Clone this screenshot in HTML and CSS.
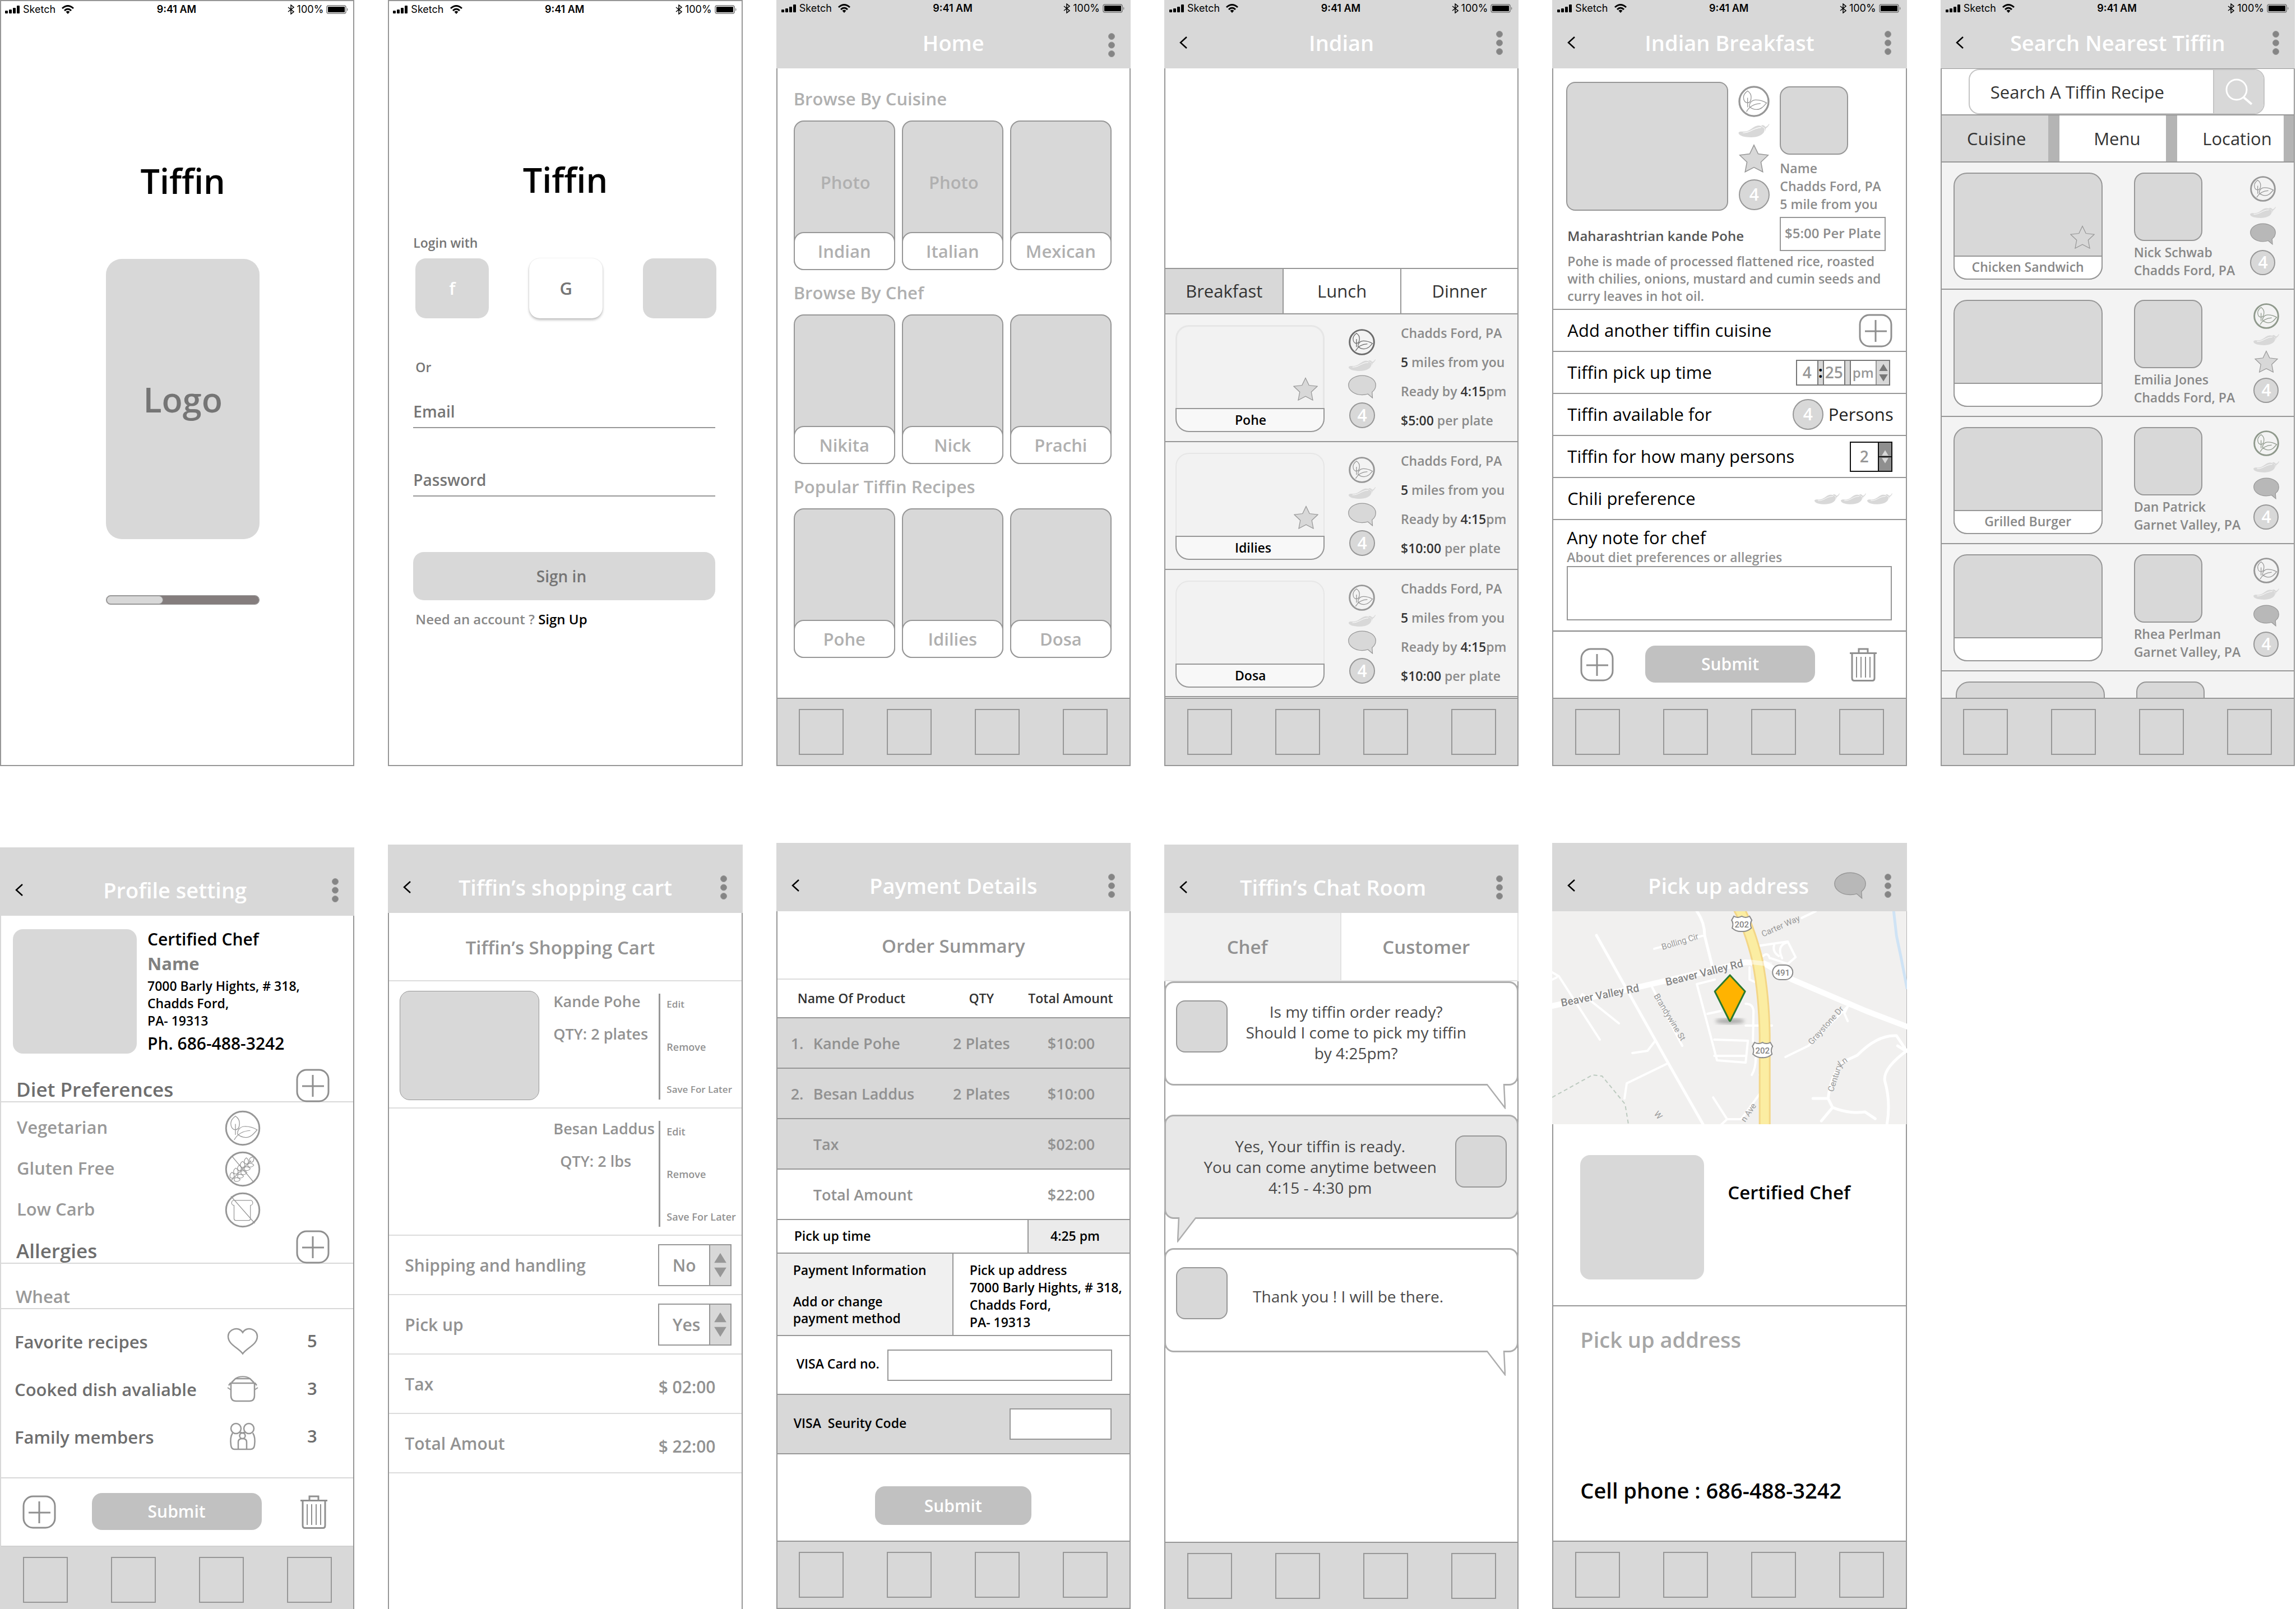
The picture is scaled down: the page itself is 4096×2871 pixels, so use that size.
FILE: index.html
```html
<!DOCTYPE html>
<html lang="en">
<head>
<meta charset="utf-8">
<meta name="viewport" content="width=device-width, initial-scale=1">
<title>Tiffin – app wireframes</title>
<link rel="stylesheet" href="styles.css">
</head>
<body>
<svg class="sprite" aria-hidden="true">
  <symbol id="signal" viewBox="0 0 26 14"><rect x="0" y="9" width="5" height="5" rx="1"/><rect x="7" y="7" width="5" height="7" rx="1"/><rect x="14" y="4" width="5" height="10" rx="1"/><rect x="21" y="0" width="5" height="14" rx="1"/></symbol>
  <symbol id="wifi" viewBox="0 0 24 16"><path d="M2 6Q12-3 22 6" fill="none" stroke="#000" stroke-width="3"/><path d="M6 10Q12 4 18 10" fill="none" stroke="#000" stroke-width="3"/><path d="M8.500 12Q12 9 15.500 12L12 16Z"/></symbol>
  <symbol id="bluetooth" viewBox="0 0 12 18"><path d="M1 5L11 13L6 17V1L11 5L1 13" fill="none" stroke="#000" stroke-width="1.500"/></symbol>
  <symbol id="battery" viewBox="0 0 40 16"><rect x="1" y="1" width="34" height="14" rx="3" fill="none" stroke="#777" stroke-width="1.500"/><rect x="3" y="3" width="30" height="10" rx="1"/><path d="M37 5Q40 8 37 11Z" fill="#777"/></symbol>
  <symbol id="back" viewBox="0 0 14 24"><path d="M13 2L2 12L13 22" fill="none" stroke="#000" stroke-width="2.500"/></symbol>
  <symbol id="dots" viewBox="0 0 12 43"><g fill="#858585" stroke="#979797"><circle cx="6" cy="6" r="5.500"/><circle cx="6" cy="21.500" r="5.500"/><circle cx="6" cy="37" r="5.500"/></g></symbol>
  <symbol id="leaf" viewBox="0 0 256 256"><g fill="none" stroke="currentColor"><circle class="ring" cx="128" cy="128" r="119"/><path class="line" d="M76 42C54 58 43 75 43 95C43 118 54 139 76 139C96 139 105 118 105 92C105 72 94 54 76 42ZM76 98V176M231 140C200 122 170 115 140 116C110 117 90 140 91 170C110 188 130 194 150 194C185 194 205 170 231 140ZM67 212C85 180 120 148 182 145"/></g></symbol>
  <symbol id="wheat" viewBox="0 0 256 256"><g fill="none" stroke="currentColor"><circle class="ring" cx="128" cy="128" r="119"/><g class="line">
    <path d="M44 211L187 68M50 35L209 225"/>
    <path d="M52 151C31 164 32 193 52 193C72 193 73 164 52 151ZM79 121C57 134 58 163 79 163C100 163 101 134 79 121ZM107 98C85 112 86 140 107 139C120 138 122 112 107 98ZM127 73C105 86 106 116 127 116C148 116 149 86 127 73ZM154 48C134 62 134 91 154 91C174 91 174 62 154 48Z"/>
    <path d="M110 203C96 184 67 185 67 203C67 221 96 222 110 203ZM134 179C120 160 91 161 91 179C91 197 120 198 134 179ZM158 153C144 134 115 135 115 153C115 173 144 174 158 153ZM182 125C168 106 139 107 139 125C139 143 168 144 182 125ZM207 100C193 81 164 82 164 100C164 118 193 119 207 100ZM207 43C186 42 175 50 175 64C176 80 187 80 196 79C207 72 209 60 207 43Z"/></g></g></symbol>
  <symbol id="bread" viewBox="0 0 256 256"><g fill="none" stroke="currentColor"><circle class="ring" cx="128" cy="128" r="119"/><path class="line" d="M68 59H180A18 18 0 0 1 183 95V190Q183 202 171 202H78Q66 202 66 190V95A18 18 0 0 1 68 59ZM44 30L214 223"/></g></symbol>
  <symbol id="chili" viewBox="0 0 193 84"><path fill="#d8d8d8" d="M0 57C1 48 14 47 30 48C72 50 84 18 118 11C126 10 136 11 141 13C146 22 154 20 158 26C164 28 163 34 162 42C158 68 120 84 80 84C40 84 3 76 0 57Z"/><path fill="#d8d8d8" d="M142 10C150 5 162 9 167 19C178 18 184 9 190 0L193 3C187 14 180 24 172 27C168 34 170 40 167 46C167 34 164 26 158 22C152 20 146 18 142 10Z"/><path fill="none" stroke="#fff" stroke-width="4" d="M27 56C72 58 92 24 141 23"/></symbol>
  <symbol id="star" viewBox="0 0 176 168"><path stroke="#979797" stroke-width="5" d="M88 6L113 58L172 65L129 106L140 164L88 137L36 164L47 106L4 65L63 58Z"/></symbol>
  <symbol id="bubble" viewBox="0 0 200 168"><path stroke="#979797" stroke-width="5" d="M141 136L174 164L171 122C190 108 197 92 197 73C197 35 154 4 100 4S3 35 3 73S46 142 100 142C115 142 128 140 141 136Z"/></symbol>
  <symbol id="plus" viewBox="0 0 60 60"><g fill="none" stroke="#8f8f8f" stroke-width="3"><rect x="2" y="2" width="56" height="56" rx="17"/><path d="M11 31H50M30 11V50"/></g></symbol>
  <symbol id="trash" viewBox="0 0 48 60"><g fill="none" stroke="#8f8f8f" stroke-width="3"><path d="M0 9.500H48M16 9V2H32V9M4 10V54Q4 58.500 8 58.500H40Q44 58.500 44 54V10"/><path stroke-width="2" d="M12 16V53M20 16V53M28 16V53M36 16V53"/></g></symbol>
  <symbol id="heart" viewBox="0 0 56 49"><path fill="none" stroke="#979797" stroke-width="2.500" d="M28 47C20 36 2 31 2 16C2 3 21-3 28 9C35-3 54 3 54 16C54 31 36 36 28 47Z"/></symbol>
  <symbol id="pot" viewBox="0 0 56 48"><g fill="none" stroke="#979797" stroke-width="2.500"><path d="M7 15V36Q7 46 16 46H40Q49 46 49 36V15"/><path d="M3 18L6 14H50L53 18M8 13L15 6H41L48 13"/><path stroke-width="2" d="M15 6C21 1 35 1 41 6M1 22L7 26M55 22L49 26"/></g></symbol>
  <symbol id="family" viewBox="0 0 46 50"><g fill="none" stroke="#979797" stroke-width="2.500"><circle cx="11" cy="11" r="9"/><circle cx="34" cy="11" r="9"/><circle cx="22.500" cy="24" r="5"/><path d="M5 19C1 25 1 34 2 41Q3 48 8 48H37Q43 48 44 41C45 34 45 25 41 19M15 48V35Q15 29 22.500 29Q30 29 30 35V48M17 19Q19 17 22.500 19Q26 17 28 19"/></g></symbol>
  <symbol id="search" viewBox="0 0 48 48"><g fill="none" stroke="#fff" stroke-width="3"><circle cx="20" cy="20" r="18"/><path stroke-width="4" d="M33 34L47 46"/></g></symbol>
  <symbol id="spin" viewBox="0 0 24 44"><path d="M12 2L22 18H2ZM12 42L22 26H2Z" fill="currentColor"/></symbol>
</svg>

<main class="board">

  <section class="phone splash" aria-label="Splash">
    <div class="status"><svg class="i-signal"><use href="#signal"/></svg><span class="carrier">Sketch</span><svg class="i-wifi"><use href="#wifi"/></svg><b class="clock">9:41 AM</b><svg class="i-bt"><use href="#bluetooth"/></svg><span>100%</span><svg class="i-battery"><use href="#battery"/></svg></div>
    <h1 class="brand">Tiffin</h1>
    <div class="logo">Logo</div>
    <progress class="loading" value="37" max="100" aria-label="Loading"></progress>
  </section>

  <section class="phone login" aria-label="Login">
    <div class="status"><svg class="i-signal"><use href="#signal"/></svg><span class="carrier">Sketch</span><svg class="i-wifi"><use href="#wifi"/></svg><b class="clock">9:41 AM</b><svg class="i-bt"><use href="#bluetooth"/></svg><span>100%</span><svg class="i-battery"><use href="#battery"/></svg></div>
    <h1 class="brand">Tiffin</h1>
    <form class="login-form">
      <p class="hint">Login with</p>
      <div class="socials"><button type="button" class="social facebook">f</button><button type="button" class="social google">G</button><button type="button" class="social" aria-label="Other account"></button></div>
      <p class="hint or">Or</p>
      <input class="line-input" type="email" placeholder="Email" aria-label="Email">
      <input class="line-input" type="password" placeholder="Password" aria-label="Password">
      <button type="button" class="signin">Sign in</button>
      <p class="signup">Need an account ? <a href="#">Sign Up</a></p>
    </form>
  </section>

  <section class="phone plain home" aria-label="Home">
    <header class="top">
      <div class="status"><svg class="i-signal"><use href="#signal"/></svg><span class="carrier">Sketch</span><svg class="i-wifi"><use href="#wifi"/></svg><b class="clock">9:41 AM</b><svg class="i-bt"><use href="#bluetooth"/></svg><span>100%</span><svg class="i-battery"><use href="#battery"/></svg></div>
      <div class="bar"><span></span><h1>Home</h1><button class="icon-btn" aria-label="Menu"><svg class="i-dots"><use href="#dots"/></svg></button></div>
    </header>
    <div class="browse">
      <h2>Browse By Cuisine</h2>
      <div class="tiles"><a href="#" class="tile"><span class="tile-photo">Photo</span><span class="tile-name">Indian</span></a><a href="#" class="tile"><span class="tile-photo">Photo</span><span class="tile-name">Italian</span></a><a href="#" class="tile"><span class="tile-photo"></span><span class="tile-name">Mexican</span></a></div>
      <h2>Browse By Chef</h2>
      <div class="tiles"><a href="#" class="tile"><span class="tile-photo"></span><span class="tile-name">Nikita</span></a><a href="#" class="tile"><span class="tile-photo"></span><span class="tile-name">Nick</span></a><a href="#" class="tile"><span class="tile-photo"></span><span class="tile-name">Prachi</span></a></div>
      <h2>Popular Tiffin Recipes</h2>
      <div class="tiles"><a href="#" class="tile"><span class="tile-photo"></span><span class="tile-name">Pohe</span></a><a href="#" class="tile"><span class="tile-photo"></span><span class="tile-name">Idilies</span></a><a href="#" class="tile"><span class="tile-photo"></span><span class="tile-name">Dosa</span></a></div>
    </div>
    <nav class="tabbar" aria-label="Main"><a href="#" aria-label="Tab 1"></a><a href="#" aria-label="Tab 2"></a><a href="#" aria-label="Tab 3"></a><a href="#" aria-label="Tab 4"></a></nav>
  </section>

  <section class="phone plain" aria-label="Indian">
    <header class="top">
      <div class="status"><svg class="i-signal"><use href="#signal"/></svg><span class="carrier">Sketch</span><svg class="i-wifi"><use href="#wifi"/></svg><b class="clock">9:41 AM</b><svg class="i-bt"><use href="#bluetooth"/></svg><span>100%</span><svg class="i-battery"><use href="#battery"/></svg></div>
      <div class="bar"><button class="icon-btn" aria-label="Back"><svg class="i-back"><use href="#back"/></svg></button><h1>Indian</h1><button class="icon-btn" aria-label="Menu"><svg class="i-dots"><use href="#dots"/></svg></button></div>
    </header>
    <div class="hero"></div>
    <div class="meals"><button class="on">Breakfast</button><button>Lunch</button><button>Dinner</button></div>
    <article class="meal strong">
      <div class="dish pale"><svg class="i-star"><use href="#star"/></svg><span class="dish-name">Pohe</span></div>
      <div class="marks"><svg class="i-leaf"><use href="#leaf"/></svg><svg class="i-chili"><use href="#chili"/></svg><svg class="i-bubble"><use href="#bubble"/></svg><span class="count">4</span></div>
      <p class="facts">Chadds Ford, PA<br><b>5</b> miles from you<br>Ready by <b>4:15</b>pm<br><b>$5:00</b> per plate</p>
    </article>
    <article class="meal">
      <div class="dish pale"><svg class="i-star"><use href="#star"/></svg><span class="dish-name">Idilies</span></div>
      <div class="marks"><svg class="i-leaf"><use href="#leaf"/></svg><svg class="i-chili"><use href="#chili"/></svg><svg class="i-bubble"><use href="#bubble"/></svg><span class="count">4</span></div>
      <p class="facts">Chadds Ford, PA<br><b>5</b> miles from you<br>Ready by <b>4:15</b>pm<br><b>$10:00</b> per plate</p>
    </article>
    <article class="meal">
      <div class="dish pale"><span class="dish-name">Dosa</span></div>
      <div class="marks"><svg class="i-leaf"><use href="#leaf"/></svg><svg class="i-chili"><use href="#chili"/></svg><svg class="i-bubble"><use href="#bubble"/></svg><span class="count">4</span></div>
      <p class="facts">Chadds Ford, PA<br><b>5</b> miles from you<br>Ready by <b>4:15</b>pm<br><b>$10:00</b> per plate</p>
    </article>
    <nav class="tabbar" aria-label="Main"><a href="#" aria-label="Tab 1"></a><a href="#" aria-label="Tab 2"></a><a href="#" aria-label="Tab 3"></a><a href="#" aria-label="Tab 4"></a></nav>
  </section>

  <section class="phone plain" aria-label="Indian Breakfast">
    <header class="top">
      <div class="status"><svg class="i-signal"><use href="#signal"/></svg><span class="carrier">Sketch</span><svg class="i-wifi"><use href="#wifi"/></svg><b class="clock">9:41 AM</b><svg class="i-bt"><use href="#bluetooth"/></svg><span>100%</span><svg class="i-battery"><use href="#battery"/></svg></div>
      <div class="bar"><button class="icon-btn" aria-label="Back"><svg class="i-back"><use href="#back"/></svg></button><h1>Indian Breakfast</h1><button class="icon-btn" aria-label="Menu"><svg class="i-dots"><use href="#dots"/></svg></button></div>
    </header>
    <div class="recipe">
      <div class="recipe-main">
        <div class="recipe-photo"></div>
        <div class="marks large"><svg class="i-leaf"><use href="#leaf"/></svg><svg class="i-chili"><use href="#chili"/></svg><svg class="i-star"><use href="#star"/></svg><span class="count">4</span></div>
        <h2>Maharashtrian kande Pohe</h2>
      </div>
      <div class="recipe-chef">
        <div class="avatar"></div>
        <p>Name<br>Chadds Ford, PA<br>5 mile from you</p>
        <strong class="price">$5:00 Per Plate</strong>
      </div>
      <p class="about">Pohe is made of processed flattened rice, roasted<br>with chilies, onions, mustard and cumin seeds and<br>curry leaves in hot oil.</p>
    </div>
    <form class="options">
      <div class="option"><span>Add another tiffin cuisine</span><button type="button" class="icon-btn" aria-label="Add cuisine"><svg class="i-plus"><use href="#plus"/></svg></button></div>
      <div class="option"><label for="hour">Tiffin pick up time</label><div class="time"><input id="hour" value="4"><i>:</i><input value="25" aria-label="Minutes"><i></i><input class="half" value="pm" aria-label="Half of day"><button type="button" aria-label="Change time"><svg><use href="#spin"/></svg></button></div></div>
      <div class="option"><span>Tiffin available for</span><span class="available"><span class="count">4</span>Persons</span></div>
      <div class="option"><label for="persons">Tiffin for how many persons</label><div class="stepper"><input id="persons" value="2"><button type="button" aria-label="Change persons"><svg><use href="#spin"/></svg></button></div></div>
      <div class="option"><span>Chili preference</span><span class="chilis"><svg class="i-chili"><use href="#chili"/></svg><svg class="i-chili"><use href="#chili"/></svg><svg class="i-chili"><use href="#chili"/></svg></span></div>
      <div class="note"><label for="note">Any note for chef</label><small>About diet preferences or allegries</small><textarea id="note"></textarea></div>
      <div class="actions"><button type="button" class="icon-btn" aria-label="Add"><svg class="i-plus"><use href="#plus"/></svg></button><button type="button" class="submit">Submit</button><button type="button" class="icon-btn" aria-label="Delete"><svg class="i-trash"><use href="#trash"/></svg></button></div>
    </form>
    <nav class="tabbar" aria-label="Main"><a href="#" aria-label="Tab 1"></a><a href="#" aria-label="Tab 2"></a><a href="#" aria-label="Tab 3"></a><a href="#" aria-label="Tab 4"></a></nav>
  </section>

  <section class="phone plain" aria-label="Search Nearest Tiffin">
    <header class="top">
      <div class="status"><svg class="i-signal"><use href="#signal"/></svg><span class="carrier">Sketch</span><svg class="i-wifi"><use href="#wifi"/></svg><b class="clock">9:41 AM</b><svg class="i-bt"><use href="#bluetooth"/></svg><span>100%</span><svg class="i-battery"><use href="#battery"/></svg></div>
      <div class="bar"><button class="icon-btn" aria-label="Back"><svg class="i-back"><use href="#back"/></svg></button><h1>Search Nearest Tiffin</h1><button class="icon-btn" aria-label="Menu"><svg class="i-dots"><use href="#dots"/></svg></button></div>
    </header>
    <form class="search"><div class="search-box"><input type="search" placeholder="Search A Tiffin Recipe" aria-label="Search a tiffin recipe"><button type="button" aria-label="Search"><svg class="i-search"><use href="#search"/></svg></button></div></form>
    <div class="filters"><button class="on">Cuisine</button><button>Menu</button><button class="last">Location</button></div>
    <article class="result">
      <div class="dish"><svg class="i-star hollow"><use href="#star"/></svg><span class="dish-name">Chicken Sandwich</span></div>
      <div class="person"><div class="avatar"></div><p>Nick Schwab<br>Chadds Ford, PA</p></div>
      <div class="marks dark first"><svg class="i-leaf"><use href="#leaf"/></svg><svg class="i-chili"><use href="#chili"/></svg><svg class="i-bubble"><use href="#bubble"/></svg><span class="count">4</span></div>
    </article>
    <article class="result">
      <div class="dish"><span class="dish-name"></span></div>
      <div class="person"><div class="avatar"></div><p>Emilia Jones<br>Chadds Ford, PA</p></div>
      <div class="marks dark green"><svg class="i-leaf"><use href="#leaf"/></svg><svg class="i-chili"><use href="#chili"/></svg><svg class="i-star"><use href="#star"/></svg><span class="count">4</span></div>
    </article>
    <article class="result">
      <div class="dish"><span class="dish-name">Grilled Burger</span></div>
      <div class="person"><div class="avatar"></div><p>Dan Patrick<br>Garnet Valley, PA</p></div>
      <div class="marks dark green"><svg class="i-leaf"><use href="#leaf"/></svg><svg class="i-chili"><use href="#chili"/></svg><svg class="i-bubble"><use href="#bubble"/></svg><span class="count">4</span></div>
    </article>
    <article class="result">
      <div class="dish"><span class="dish-name"></span></div>
      <div class="person"><div class="avatar"></div><p>Rhea Perlman<br>Garnet Valley, PA</p></div>
      <div class="marks dark"><svg class="i-leaf"><use href="#leaf"/></svg><svg class="i-chili"><use href="#chili"/></svg><svg class="i-bubble"><use href="#bubble"/></svg><span class="count">4</span></div>
    </article>
    <article class="result cut"><div class="dish"></div><div class="person"><div class="avatar"></div></div></article>
    <nav class="tabbar" aria-label="Main"><a href="#" aria-label="Tab 1"></a><a href="#" aria-label="Tab 2"></a><a href="#" aria-label="Tab 3"></a><a href="#" aria-label="Tab 4"></a></nav>
  </section>

  <section class="phone plain light open profile-screen" aria-label="Profile setting">
    <header class="top tall">
      <div class="bar"><button class="icon-btn" aria-label="Back"><svg class="i-back"><use href="#back"/></svg></button><h1>Profile setting</h1><button class="icon-btn" aria-label="Menu"><svg class="i-dots"><use href="#dots"/></svg></button></div>
    </header>
    <div class="profile"><div class="portrait"></div>
      <div class="contact"><h2>Certified Chef</h2><b>Name</b><address>7000 Barly Hights, # 318,<br>Chadds Ford,<br>PA- 19313</address><p>Ph. 686-488-3242</p></div>
    </div>
    <div class="section-head"><h2>Diet Preferences</h2><button class="icon-btn" aria-label="Add diet"><svg class="i-plus"><use href="#plus"/></svg></button></div>
    <ul class="diets">
      <li><span>Vegetarian</span><svg class="i-diet"><use href="#leaf"/></svg></li>
      <li><span>Gluten Free</span><svg class="i-diet"><use href="#wheat"/></svg></li>
      <li><span>Low Carb</span><svg class="i-diet"><use href="#bread"/></svg></li>
    </ul>
    <div class="section-head"><h2>Allergies</h2><button class="icon-btn" aria-label="Add allergy"><svg class="i-plus"><use href="#plus"/></svg></button></div>
    <p class="allergy">Wheat</p>
    <ul class="totals">
      <li><span>Favorite recipes</span><svg class="i-stat"><use href="#heart"/></svg><b>5</b></li>
      <li><span>Cooked dish avaliable</span><svg class="i-stat"><use href="#pot"/></svg><b>3</b></li>
      <li><span>Family members</span><svg class="i-stat"><use href="#family"/></svg><b>3</b></li>
    </ul>
    <div class="actions"><button type="button" class="icon-btn" aria-label="Add"><svg class="i-plus"><use href="#plus"/></svg></button><button type="button" class="submit">Submit</button><button type="button" class="icon-btn" aria-label="Delete"><svg class="i-trash"><use href="#trash"/></svg></button></div>
    <nav class="tabbar short" aria-label="Main"><a href="#" aria-label="Tab 1"></a><a href="#" aria-label="Tab 2"></a><a href="#" aria-label="Tab 3"></a><a href="#" aria-label="Tab 4"></a></nav>
  </section>

  <section class="phone plain open cart-screen" aria-label="Shopping cart">
    <header class="top tall">
      <div class="bar"><button class="icon-btn" aria-label="Back"><svg class="i-back"><use href="#back"/></svg></button><h1>Tiffin’s shopping cart</h1><button class="icon-btn" aria-label="Menu"><svg class="i-dots"><use href="#dots"/></svg></button></div>
    </header>
    <h2 class="subtitle cart-title">Tiffin’s Shopping Cart</h2>
    <article class="item"><div class="item-photo"></div><div class="item-text"><span>Kande Pohe</span><span>QTY: 2 plates</span></div><div class="item-links"><a href="#" class="tiny">Edit</a><a href="#">Remove</a><a href="#" class="tiny">Save For Later</a></div></article>
    <article class="item"><div class="item-photo none"></div><div class="item-text"><span>Besan Laddus</span><span class="in">QTY: 2 lbs</span></div><div class="item-links"><a href="#">Edit</a><a href="#">Remove</a><a href="#">Save For Later</a></div></article>
    <div class="cart-row"><label for="shipping">Shipping and handling</label><div class="picker"><select id="shipping"><option>No</option><option>Yes</option></select><span class="spin"><svg><use href="#spin"/></svg></span></div></div>
    <div class="cart-row"><label for="pickup">Pick up</label><div class="picker"><select id="pickup"><option>Yes</option><option>No</option></select><span class="spin"><svg><use href="#spin"/></svg></span></div></div>
    <div class="cart-row"><span>Tax</span><span class="sum">$ 02:00</span></div>
    <div class="cart-row"><span>Total Amout</span><span class="sum">$ 22:00</span></div>
  </section>

  <section class="phone plain" aria-label="Payment Details">
    <header class="top tall">
      <div class="bar"><button class="icon-btn" aria-label="Back"><svg class="i-back"><use href="#back"/></svg></button><h1>Payment Details</h1><button class="icon-btn" aria-label="Menu"><svg class="i-dots"><use href="#dots"/></svg></button></div>
    </header>
    <h2 class="subtitle">Order Summary</h2>
    <table class="order">
      <thead><tr><th class="no"></th><th class="product">Name Of Product</th><th>QTY</th><th>Total Amount</th></tr></thead>
      <tbody>
        <tr><td class="no">1.</td><td>Kande Pohe</td><td class="mid">2 Plates</td><td class="mid">$10:00</td></tr>
        <tr><td class="no">2.</td><td>Besan Laddus</td><td class="mid">2 Plates</td><td class="mid">$10:00</td></tr>
        <tr><td></td><td>Tax</td><td></td><td class="mid">$02:00</td></tr>
        <tr class="total"><td></td><td>Total Amount</td><td></td><td class="mid">$22:00</td></tr>
      </tbody>
    </table>
    <div class="pickup-time"><span>Pick up time</span><b>4:25 pm</b></div>
    <div class="pay-info"><div class="method"><p>Payment Information</p><p><a href="#">Add or change<br>payment method</a></p></div><address>Pick up address<br>7000 Barly Hights, # 318,<br>Chadds Ford,<br>PA- 19313</address></div>
    <div class="card-row"><label for="card">VISA Card no.</label><input id="card"></div>
    <div class="card-row code"><label for="cvv">VISA&nbsp; Seurity Code</label><input id="cvv"></div>
    <div class="pay"><button type="button" class="submit">Submit</button></div>
    <nav class="tabbar" aria-label="Main"><a href="#" aria-label="Tab 1"></a><a href="#" aria-label="Tab 2"></a><a href="#" aria-label="Tab 3"></a><a href="#" aria-label="Tab 4"></a></nav>
  </section>

  <section class="phone plain open chat-screen" aria-label="Chat room">
    <header class="top tall">
      <div class="bar"><button class="icon-btn" aria-label="Back"><svg class="i-back"><use href="#back"/></svg></button><h1>Tiffin’s Chat Room</h1><button class="icon-btn" aria-label="Menu"><svg class="i-dots"><use href="#dots"/></svg></button></div>
    </header>
    <div class="sides"><button class="on">Chef</button><button>Customer</button></div>
    <div class="chat">
      <div class="msg"><div class="face"></div><p>Is my tiffin order ready?<br>Should I come to pick my tiffin<br>by 4:25pm?</p><svg class="tail" viewBox="0 0 34 45"><path d="M0 0L33 43L31 0" fill="#fff" stroke="#adadad" stroke-width="2.500"/></svg></div>
      <div class="msg reply"><p>Yes, Your tiffin is ready.<br>You can come anytime between<br>4:15 - 4:30 pm</p><div class="face"></div><svg class="tail" viewBox="0 0 34 45"><path d="M34 0L1 43L3 0" fill="#e8e8e8" stroke="#adadad" stroke-width="2.500"/></svg></div>
      <div class="msg"><div class="face"></div><p class="one">Thank you ! I will be there.</p><svg class="tail" viewBox="0 0 34 45"><path d="M0 0L33 43L31 0" fill="#fff" stroke="#adadad" stroke-width="2.500"/></svg></div>
    </div>
    <nav class="tabbar" aria-label="Main"><a href="#" aria-label="Tab 1"></a><a href="#" aria-label="Tab 2"></a><a href="#" aria-label="Tab 3"></a><a href="#" aria-label="Tab 4"></a></nav>
  </section>

  <section class="phone plain" aria-label="Pick up address">
    <header class="top tall">
      <div class="bar with-chat"><button class="icon-btn" aria-label="Back"><svg class="i-back"><use href="#back"/></svg></button><h1>Pick up address</h1><button class="icon-btn" aria-label="Chat"><svg class="i-bubble"><use href="#bubble"/></svg></button><button class="icon-btn" aria-label="Menu"><svg class="i-dots"><use href="#dots"/></svg></button></div>
    </header>
    <svg class="map" viewBox="0 0 632 380" preserveAspectRatio="xMidYMid slice" role="img" aria-label="Map around Beaver Valley Rd">
      <defs><filter id="soft"><feGaussianBlur stdDeviation="3"/></filter></defs>
      <rect width="632" height="380" fill="#f1f0ef"/>
      <path d="M609 0L614 44L622 82L633 139" fill="none" stroke="#cfe3f5" stroke-width="5"/>
      <g fill="none" stroke="#fff" stroke-width="4" stroke-linejoin="round" stroke-linecap="round">
        <path stroke-width="5" d="M79 43L207 271L269 380"/>
        <path stroke-width="5" d="M258 0Q272 20 272 44L287 104"/>
        <path d="M0 109L12 116L85 229M0 122L8 118M54 148L119 200M54 148L46 160M178 135L232 240M143 253L170 249L184 231M129 334L133 307L205 272M182 67L268 44M258 130L294 266L345 270L349 231L289 229M258 130L290 122M277 183L300 178M345 165Q358 165 359 178L358 232M289 258L346 258M356 292Q363 280 363 262M416 260L457 240L527 170L521 182L527 196"/>
        <path stroke-width="5" d="M465 334H492L500 350L480 374M500 350Q530 362 558 358L576 370M492 334Q497 290 520 268L544 257Q580 220 614 222L632 249Q590 280 593 302Q604 340 597 380M632 250L616 240"/>
        <path d="M366 62L420 54L434 82L420 94L390 84M396 60Q392 72 404 80M418 56Q400 62 410 84M445 12L470 0M287 332L312 371L337 371L372 323M312 371L300 382M352 100V122L366 128M345 204H392M370 292H386M372 314H384M376 80Q384 72 388 84"/>
        <path stroke-width="10" d="M0 169L160 134L345 91L378 93L428 122L560 178L636 207"/>
      </g>
      <path d="M0 332L72 292L89 294L130 344L136 380" fill="none" stroke="#bccabf" stroke-width="2" stroke-dasharray="7 5"/>
      <g fill="none"><path d="M332-6Q352 30 366 88Q378 150 379 222V384" stroke="#f3d687" stroke-width="21"/><path d="M332-6Q352 30 366 88Q378 150 379 222V384" stroke="#fbeda2" stroke-width="15"/></g>
      <path d="M350 90L392 95" stroke="#fff" stroke-width="8" opacity=".5"/>
      <g class="road">
        <text transform="translate(17 170) rotate(-11)">Beaver Valley Rd</text>
        <text transform="translate(204 133) rotate(-14)">Beaver Valley Rd</text>
      </g>
      <g class="street">
        <text transform="translate(197 69) rotate(-17)">Bolling Cir</text>
        <text transform="translate(376 46) rotate(-24)">Carter Way</text>
        <text transform="translate(181 151) rotate(59)">Brandywine St</text>
        <text transform="translate(463 239) rotate(-48)">Graystone Dr</text>
        <text transform="translate(501 323) rotate(-72)">Century</text>
        <text transform="translate(514 277) rotate(-35)">Ln</text>
        <text transform="translate(344 377) rotate(-56)">n Ave</text>
        <text transform="translate(181 362) rotate(50)">W</text>
      </g>
      <g class="shield" fill="#fff" stroke="#8a8a8a" stroke-width="2"><path d="M324 9Q331 13 338 9Q345 13 352 9L356 16Q352 22 355 30Q347 37 338 36Q329 37 321 30Q324 22 320 16Z"/><path d="M361 234Q368 238 375 234Q382 238 389 234L393 241Q389 247 392 255Q384 262 375 261Q366 262 358 255Q361 247 357 241Z"/><rect x="393" y="96" width="36" height="26" rx="13"/></g>
      <g class="shield-no"><text x="338" y="29">202</text><text x="375" y="254">202</text><text x="411" y="115">491</text></g>
      <ellipse cx="317" cy="196" rx="26" ry="5" fill="#666" opacity=".5" filter="url(#soft)"/>
      <path d="M317 114L344 143L318 195Q317 197 316 195L290 143Z" fill="#ffb300" stroke="#2b7a2f" stroke-width="3" stroke-linejoin="round"/>
    </svg>
    <div class="pickup-chef"><div class="portrait"></div><h2>Certified Chef</h2></div>
    <div class="pickup-address"><h2>Pick up address</h2><p>Cell phone : 686-488-3242</p></div>
    <nav class="tabbar" aria-label="Main"><a href="#" aria-label="Tab 1"></a><a href="#" aria-label="Tab 2"></a><a href="#" aria-label="Tab 3"></a><a href="#" aria-label="Tab 4"></a></nav>
  </section>

</main>
</body>
</html>
```
FILE: styles.css
```css
*, *::before, *::after { box-sizing: border-box; }

:root {
  --fill: #d8d8d8;
  --stroke: #979797;
  --ring: 12;
  --line: 5;
}

body {
  margin: 0;
  background: #fff;
  color: #000;
  font: 600 23px/31px "Open Sans", "Noto Sans", sans-serif;
}

h1, h2, p, ul, address { margin: 0; padding: 0; font: inherit; }
ul { list-style: none; }
a { color: inherit; text-decoration: none; }
b, strong { font-weight: inherit; }
button, input, textarea, select {
  margin: 0; padding: 0; border: 0; border-radius: 0;
  background: none; color: inherit; font: inherit;
  appearance: none; outline: 0;
}
input { width: 100%; min-width: 0; }
svg { display: block; flex: none; }
.sprite { position: absolute; width: 0; height: 0; }
.icon-btn { display: flex; }

/* board */
.board {
  display: grid;
  grid-template-columns: repeat(6, minmax(0, 1fr));
  grid-template-rows: auto 1fr;
  gap: 137px 60px;
  min-height: 100vh;
  padding-right: 2px;
}
.phone {
  display: flex;
  flex-direction: column;
  border: 2px solid var(--stroke);
  background: #fff;
  min-width: 0;
}
.phone.plain { border-top: 0; }
.phone.open { border-bottom: 0; }
.phone.light { border-left-color: var(--fill); }
.profile-screen { margin-top: 8px; }
.cart-screen, .chat-screen { margin-top: 3px; }

/* status bar */
.status {
  display: flex;
  align-items: center;
  height: 30px;
  padding: 0 8px 0 7px;
  font: 400 18px/30px Inter, "Open Sans", sans-serif;
}
.clock { flex: 1; text-align: center; font-weight: 600; padding-right: 16px; }
.carrier { padding: 0 10px 0 6px; }
.i-signal { width: 26px; height: 14px; }
.i-wifi { width: 24px; height: 16px; }
.i-bt { width: 12px; height: 18px; margin-right: 5px; }
.i-battery { width: 40px; height: 16px; margin-left: 5px; }

/* header */
.top { margin: 0 -2px; height: 122px; flex: none; background: var(--fill); }
.top .status { padding: 0 10px 0 9px; }
.top.tall { padding-top: 30px; }
.bar {
  display: grid;
  grid-template-columns: 16px 1fr 16px;
  align-items: center;
  height: 92px;
  padding: 0 26px;
}
.bar h1 { text-align: center; font-size: 38px; line-height: 52px; color: #fff; }
.bar .icon-btn { justify-content: center; }
.i-back { width: 14px; height: 24px; }
.i-dots { width: 12px; height: 43px; }
.home .i-dots { margin-top: 8px; }
.profile-screen h1 { padding-right: 8px; }
.chat-screen h1 { padding-right: 30px; }
.bar.with-chat { grid-template-columns: 16px 1fr 57px 16px; column-gap: 31px; }
.bar.with-chat h1 { padding-left: 84px; white-space: nowrap; }
.with-chat .i-bubble { width: 57px; height: 48px; fill: #b8b8b8; }

/* bottom tabs */
.tabbar {
  display: grid;
  grid-template-columns: repeat(4, 1fr);
  justify-items: center;
  height: 120px;
  margin-top: auto;
  padding-top: 18px;
  flex: none;
  border-top: 2px solid var(--stroke);
  background: var(--fill);
}
.tabbar a { width: 80px; height: 82px; border: 2px solid var(--stroke); }
.tabbar.short { height: 113px; }
.light .tabbar { border-top-color: #d0d0d0; }

/* splash and login */
.brand { text-align: center; font-size: 61px; line-height: 80px; }
.splash { align-items: center; }
.splash .status { align-self: stretch; }
.splash .brand, .logo, .loading { margin-left: 20px; }
.splash .brand { margin-top: 251px; }
.logo {
  width: 274px; height: 500px; margin-top: 99px; padding-top: 2px;
  border-radius: 28px; background: var(--fill); color: #757575;
  font-size: 61px; line-height: 498px; text-align: center;
}
.loading {
  width: 274px; height: 17px; margin-top: 100px; appearance: none;
  border: 1px solid var(--stroke); border-radius: 8px; overflow: hidden;
}
.loading::-webkit-progress-bar { background: #847d7d; }
.loading::-webkit-progress-value { background: var(--fill); border: 1px solid var(--stroke); border-radius: 8px; }

.login .brand { margin-top: 249px; }
.login-form { display: flex; flex-direction: column; padding: 55px 47px 0 43px; }
.hint { color: #757575; line-height: 34px; }
.hint.or { margin-top: 70px; padding-left: 4px; }
.socials { display: flex; gap: 72px; margin: 11px 0 0 4px; }
.social { width: 131px; height: 107px; border-radius: 19px; background: var(--fill); font-size: 31px; flex: none; }
.facebook { color: #fff; }
.google { background: #fff; color: #757575; box-shadow: 0 3px 4px rgba(0, 0, 0, .25), 0 0 2px rgba(0, 0, 0, .12); }
.line-input { height: 56px; padding-bottom: 2px; border-bottom: 2px solid var(--stroke); font-size: 28px; }
.line-input::placeholder { color: #757575; opacity: 1; }
.line-input[type="email"] { margin: 36px 0 66px; }
.signin { height: 86px; margin-top: 99px; padding-right: 10px; border-radius: 19px; background: var(--fill); color: #757575; font-size: 28px; }
.signup { margin-top: 17px; padding-left: 4px; font-size: 24px; line-height: 34px; color: #888; }
.signup a { color: #000; }

/* home */
.browse { padding: 34px 32px 51px 29px; color: #b0b0b0; font-size: 31px; }
.browse h2 { line-height: 40px; }
.tiles { display: grid; grid-template-columns: repeat(3, 1fr); gap: 12px; margin: 19px 0 20px; }
.tile { display: flex; flex-direction: column; height: 267px; border: 2px solid var(--stroke); border-radius: 18px; background: var(--fill); text-align: center; }
.tile-photo { display: flex; flex: 1; align-items: center; justify-content: center; padding: 20px 0 0 4px; }
.tile-name { height: 68px; flex: none; margin: 0 -2px -2px; border: 2px solid var(--stroke); border-radius: 18px; background: #fff; line-height: 64px; }

/* dish list */
.hero { height: 356px; }
.meals { display: grid; grid-template-columns: repeat(3, 1fr); height: 83px; border: solid var(--stroke); border-width: 2px 0; font-size: 31px; font-weight: 400; color: #333; }
.meals button + button { border-left: 2px solid var(--stroke); }
.meals .on { background: var(--fill); }
.meal { display: flex; height: 228px; padding-left: 18px; border-bottom: 2px solid var(--stroke); background: #f3f3f3; --ring: 16; --line: 7; }
.meal:nth-last-child(2) { height: 227px; }
.dish {
  position: relative; display: flex; flex-direction: column; justify-content: flex-end;
  width: 266px; height: 191px; margin-top: 19px; flex: none;
  border: 2px solid var(--stroke); border-radius: 24px; background: var(--fill);
}
.dish-name {
  height: 43px; margin: 0 -2px -2px; border: 2px solid var(--stroke); border-radius: 0 0 24px 24px;
  background: #fff; color: #888; line-height: 36px; text-align: center;
}
.dish .i-star { position: absolute; right: 9px; bottom: 53px; }
.pale { border-color: #e6e6e6; background: #f2f2f2; }
.strong .pale { border-width: 3px; }
.strong .pale .dish-name { margin: 0 -3px -3px; }
.pale .dish-name { background: #f8f8f8; color: #000; text-align: left; padding-left: 104px; line-height: 39px; }
.marks { display: flex; flex-direction: column; align-items: center; gap: 7px; width: 50px; flex: none; color: var(--stroke); }
.ring { stroke-width: var(--ring); }
.line { stroke-width: var(--line); }
.strong .marks .i-leaf { color: #6b6b6b; }
.meal .marks { margin: 26px 44px 0 42px; }
.i-leaf { width: 47px; height: 47px; }
.i-chili { width: 50px; height: 21px; }
.i-star { width: 44px; height: 42px; fill: var(--fill); }
.i-star.hollow { fill: none; }
.i-bubble { width: 50px; height: 42px; fill: var(--fill); }
.count {
  display: block; width: 46px; height: 46px; flex: none;
  border: 2px solid var(--stroke); border-radius: 50%; background: var(--fill);
  color: #fff; font-size: 30px; line-height: 41px; text-align: center;
}
.facts { padding-top: 7px; line-height: 52px; color: #8a8a8a; white-space: nowrap; }
.facts b { color: #333; }

/* recipe */
.recipe { display: grid; grid-template-columns: 381px 1fr; padding: 24px 0 7px 23px; color: #8c8c8c; }
.recipe-main { display: grid; grid-template-columns: 289px 56px; column-gap: 18px; align-content: start; }
.recipe-photo { height: 230px; border: 2px solid var(--stroke); border-radius: 16px; background: var(--fill); }
.recipe-main h2 { grid-column: 1 / -1; margin: 29px 0 0 2px; font-size: 24px; line-height: 32px; color: #555; }
.marks.large { width: 56px; gap: 12px; padding-top: 7px; --ring: 15; --line: 6; }
.large .i-leaf { width: 56px; height: 56px; }
.large .i-chili { width: 56px; height: 24px; }
.large .i-star { width: 54px; height: 51px; }
.large .count, .available .count { width: 55px; height: 55px; line-height: 50px; }
.avatar { width: 122px; height: 122px; border: 2px solid var(--stroke); border-radius: 18px; background: var(--fill); }
.recipe-chef .avatar { margin-top: 8px; }
.recipe-chef p { margin-top: 8px; line-height: 32px; white-space: nowrap; }
.price { display: block; width: 189px; height: 61px; margin-top: 7px; border: 2px solid var(--stroke); font-size: 24px; line-height: 54px; text-align: center; white-space: nowrap; }
.about { grid-column: 1 / -1; margin: 3px 0 0 2px; white-space: nowrap; }
.option { display: flex; justify-content: space-between; align-items: center; height: 75px; padding: 0 24px 0 25px; border-top: 2px solid var(--stroke); font-size: 31px; font-weight: 400; }
.i-plus { width: 60px; height: 60px; }
.time { display: flex; height: 46px; margin-right: 4px; border: 2px solid #777; background: var(--fill); font-weight: 600; color: var(--stroke); }
.time input { width: 36px; background: #fff; font-size: 28px; text-align: center; }
.time i { width: 12px; border: solid #777; border-width: 0 2px; color: #000; font: 700 28px/38px "Open Sans", sans-serif; text-align: center; }
.time .half { width: 44px; font-size: 24px; }
.time button { width: 24px; padding: 4px 2px; border-left: 2px solid var(--stroke); color: #777; }
.time button svg { width: 20px; height: 34px; }
.available { display: flex; align-items: center; gap: 9px; color: #222; }
.option .available { margin-right: -2px; }
.available .count { font-weight: 600; }
.stepper { display: flex; width: 76px; height: 54px; border: 2px solid #111; font-weight: 600; color: var(--stroke); }
.stepper input { font-size: 28px; text-align: center; }
.stepper button { width: 24px; flex: none; border-left: 2px solid #111; background: linear-gradient(#111, #111) center / 100% 2px no-repeat #8f8f8f; color: #d8d8d8; }
.stepper button svg { width: 22px; height: 44px; padding: 4px; }
.chilis { display: flex; gap: 2px; }
.chilis .i-chili { width: 45px; height: 20px; }
.note { display: flex; flex-direction: column; height: 199px; padding: 12px 25px 0 24px; border-top: 2px solid var(--stroke); }
.note label { font-size: 31px; line-height: 38px; font-weight: 400; }
.note small { font-size: 23px; line-height: 32px; color: #929292; }
.note textarea { height: 97px; border: 2px solid var(--stroke); resize: none; }
.actions { display: flex; justify-content: space-between; align-items: center; height: 120px; padding: 0 52px 0 48px; border-top: 2px solid #858585; }
.submit { width: 303px; height: 66px; border-radius: 18px; background: #c1c1c1; color: #fff; font-size: 30px; }
.actions .submit { margin: 0 6px 3px 0; }
.i-trash { width: 48px; height: 60px; }

/* search */
.search { display: flex; justify-content: center; height: 84px; border: solid var(--stroke); border-width: 1px 0 2px; padding-right: 4px; }
.search-box { display: flex; width: 528px; border: 2px solid #c4c4c4; border-radius: 19px; overflow: hidden; }
.search-box input { padding-left: 37px; font-size: 31px; font-weight: 400; color: #333; }
.search-box input::placeholder { color: #333; opacity: 1; }
.search-box button { width: 90px; flex: none; display: flex; align-items: center; justify-content: center; border-left: 2px solid #c4c4c4; background: var(--fill); }
.i-search { width: 48px; height: 48px; }
.filters { display: grid; grid-template-columns: repeat(3, 1fr); gap: 20px; height: 84px; padding-right: 18px; border-bottom: 2px solid var(--stroke); background: #b4b4b4; font-size: 31px; font-weight: 400; color: #333; }
.filters button { padding-left: 16px; background: #fff; }
.filters .on { padding-left: 6px; background: var(--fill); }
.filters .last { padding-left: 24px; }
.result { display: flex; height: 227px; padding-left: 21px; border-bottom: 2px solid var(--stroke); background: #f3f3f3; color: #888; --ring: 16; --line: 7; }
.result .dish { margin-top: 18px; }
.result .i-star.hollow { right: 12px; }
.person { flex: 1; padding: 18px 0 0 56px; white-space: nowrap; }
.person p { margin-top: 4px; line-height: 32px; }
.result .marks { gap: 9px; width: 46px; margin: 24px 26px 0 0; }
.result .marks.first { margin-right: 32px; }
.result .i-leaf { width: 46px; height: 46px; }
.result .i-chili { width: 46px; height: 20px; }
.result .i-bubble { width: 46px; height: 39px; fill: #b8b8b8; }
.result .marks .i-star { height: 40px; }
.result .count { width: 45px; height: 45px; line-height: 40px; }
.green { color: #8f998c; }
.result.cut { height: 47px; padding-left: 25px; border: 0; overflow: hidden; }

/* profile */
.profile { display: flex; gap: 19px; height: 273px; padding: 24px 0 0 21px; }
.portrait { width: 221px; height: 222px; flex: none; border-radius: 18px; background: var(--fill); }
.contact { white-space: nowrap; }
.contact h2, .contact p { font-size: 30px; line-height: 40px; }
.contact h2 { margin-top: -2px; }
.contact p { margin-top: 5px; }
.contact b { display: block; margin: 2px 0 4px; font-size: 31px; font-weight: 700; line-height: 42px; color: #808080; }
.section-head { display: flex; justify-content: space-between; align-items: flex-end; height: 60px; padding: 0 42px 0 27px; border-bottom: 2px solid var(--fill); color: #6e6e6e; font-size: 35px; line-height: 42px; }
.section-head .icon-btn { margin-bottom: -2px; }
.diets { padding-top: 9px; color: #999; font-size: 31px; }
.diets li { display: grid; grid-template-columns: 371px 1fr; align-items: center; height: 73px; padding-left: 28px; }
.diets span { padding-bottom: 3px; }
.i-diet { width: 64px; height: 64px; color: var(--stroke); }
.allergy { height: 81px; padding: 38px 0 0 26px; border-bottom: 2px solid var(--fill); color: #999; font-size: 31px; line-height: 40px; }
.totals { padding: 14px 0 31px 24px; color: #6e6e6e; font-size: 31px; }
.totals li { display: grid; grid-template-columns: 379px 143px 1fr; align-items: center; height: 85px; }
.totals span { padding-top: 3px; }
.i-stat { width: 56px; height: 50px; }
.profile-screen .actions { height: 122px; padding: 0 46px 0 38px; border-top-color: var(--fill); }

/* cart */
.subtitle { height: 122px; border-bottom: 2px solid #dcdcdc; color: #949494; font-size: 33px; line-height: 124px; text-align: center; }
.cart-title { padding-right: 18px; }
.item { display: flex; height: 227px; padding: 17px 0 0 19px; border-bottom: 2px solid #dcdcdc; color: #929292; font-size: 27px; white-space: nowrap; }
.item-photo { width: 249px; height: 195px; flex: none; border: 1px solid var(--stroke); border-radius: 18px; background: var(--fill); }
.item-photo.none { visibility: hidden; }
.item-text { display: flex; flex-direction: column; width: 188px; padding: 3px 0 0 25px; gap: 27px; flex: none; }
.item-text .in { padding-left: 12px; }
.item-links { display: flex; flex-direction: column; justify-content: space-between; height: 189px; margin: 5px 0 0 25px; padding: 7px 0 6px 11px; border-left: 3px solid var(--stroke); font-size: 18px; line-height: 24px; }
.tiny { font-size: 17px; }
.cart-row { display: flex; justify-content: space-between; align-items: center; height: 106px; padding: 0 18px 0 28px; border-bottom: 2px solid #dcdcdc; color: #929292; font-size: 30px; }
.picker { display: flex; width: 131px; height: 75px; border: 2px solid var(--stroke); }
.picker select { flex: 1; padding-left: 24px; background: #fff; }
.spin { width: 38px; padding: 5px; border-left: 2px solid var(--stroke); background: var(--fill); color: var(--stroke); }
.spin svg { width: 26px; height: 61px; }
.sum { width: 130px; padding-top: 10px; }

/* payment */
.order { width: 100%; border-collapse: collapse; table-layout: fixed; color: #919191; font-size: 27px; }
.order th { height: 68px; padding: 0; color: #333; font-size: 23px; font-weight: 600; white-space: nowrap; }
.order th.no { width: 64px; }
.order th.product { width: 234px; text-align: left; text-indent: -28px; }
.order th:last-child { width: 198px; padding-right: 12px; }
.order tbody tr { height: 90px; border: solid var(--stroke); border-width: 2px 0; background: var(--fill); }
.order tbody .total { background: #fff; }
.order td { padding: 0; }
.order .mid { text-align: center; }
.order .mid:last-child { padding-right: 10px; }
.order .no { text-align: left; padding-left: 24px; }
.pickup-time { display: grid; grid-template-columns: 1fr 182px; height: 58px; line-height: 56px; padding-left: 30px; }
.pickup-time b { border-left: 2px solid var(--stroke); background: #ebebeb; text-align: center; padding-right: 14px; }
.pay-info { display: grid; grid-template-columns: 1fr 1fr; height: 149px; border: solid var(--stroke); border-width: 2px 0; white-space: nowrap; }
.method { padding: 14px 0 0 28px; border-right: 2px solid var(--stroke); background: #f0f0f0; }
.method p + p { margin-top: 25px; line-height: 30px; }
.pay-info address { padding: 14px 0 0 29px; }
.card-row { display: flex; align-items: center; justify-content: space-between; height: 105px; padding: 0 31px 0 34px; border-bottom: 2px solid var(--stroke); }
.card-row label { padding-bottom: 4px; }
.card-row input { width: 401px; height: 56px; border: 2px solid var(--stroke); background: #fff; }
.card-row.code { height: 106px; padding: 0 32px 0 29px; background: var(--fill); }
.card-row.code input { width: 182px; }
.pay { display: flex; justify-content: center; padding: 57px 1px 0 0; }
.pay .submit { width: 279px; height: 69px; }

/* chat */
.sides { display: grid; grid-template-columns: 1fr 1fr; height: 122px; margin: 0 -2px; color: #919191; font-size: 33px; }
.sides .on { background: #f0f0f0; padding-right: 18px; }
.sides button { padding-right: 12px; border-bottom: 2px solid #e2e2e2; border-right: 2px solid #e2e2e2; }
.chat { display: flex; flex-direction: column; gap: 52px; margin: 0 -2px; }
.msg { position: relative; display: flex; height: 186px; padding: 31px 18px; border: 3px solid #adadad; border-radius: 17px; background: #fff; color: #4a4a4a; font-size: 28px; font-weight: 400; line-height: 37px; text-align: center; white-space: nowrap; }
.msg p { flex: 1; padding: 2px 40px 0 0; }
.msg .one { padding: 34px 68px 0 0; }
.msg.reply p { padding: 4px 0 0 16px; }
.reply { background: #e8e8e8; }
.face { width: 92px; height: 93px; flex: none; border: 2px solid var(--stroke); border-radius: 16px; background: var(--fill); }
.reply .face { margin-top: 3px; }
.tail { position: absolute; right: 20px; top: 180px; width: 34px; height: 45px; }
.reply .tail { right: auto; left: 20px; }

/* pick up address */
.map { width: calc(100% + 4px); height: 380px; margin: 0 -2px; }
.map text { font-family: Roboto, sans-serif; font-weight: 500; fill: #858585; }
.road text { font-size: 19px; }
.street text { font-size: 15px; fill: #9a9a9a; font-weight: 400; }
.shield-no text { font-size: 15px; text-anchor: middle; }
.pickup-chef { display: flex; gap: 42px; height: 325px; padding: 55px 0 0 48px; border-bottom: 2px solid var(--stroke); }
.pickup-chef h2 { padding-top: 45px; font-size: 33px; line-height: 44px; }
.pickup-address { padding: 33px 0 0 48px; font-size: 38px; line-height: 52px; }
.pickup-address h2 { color: #a6a6a6; }
.pickup-address p { margin-top: 217px; }
```
